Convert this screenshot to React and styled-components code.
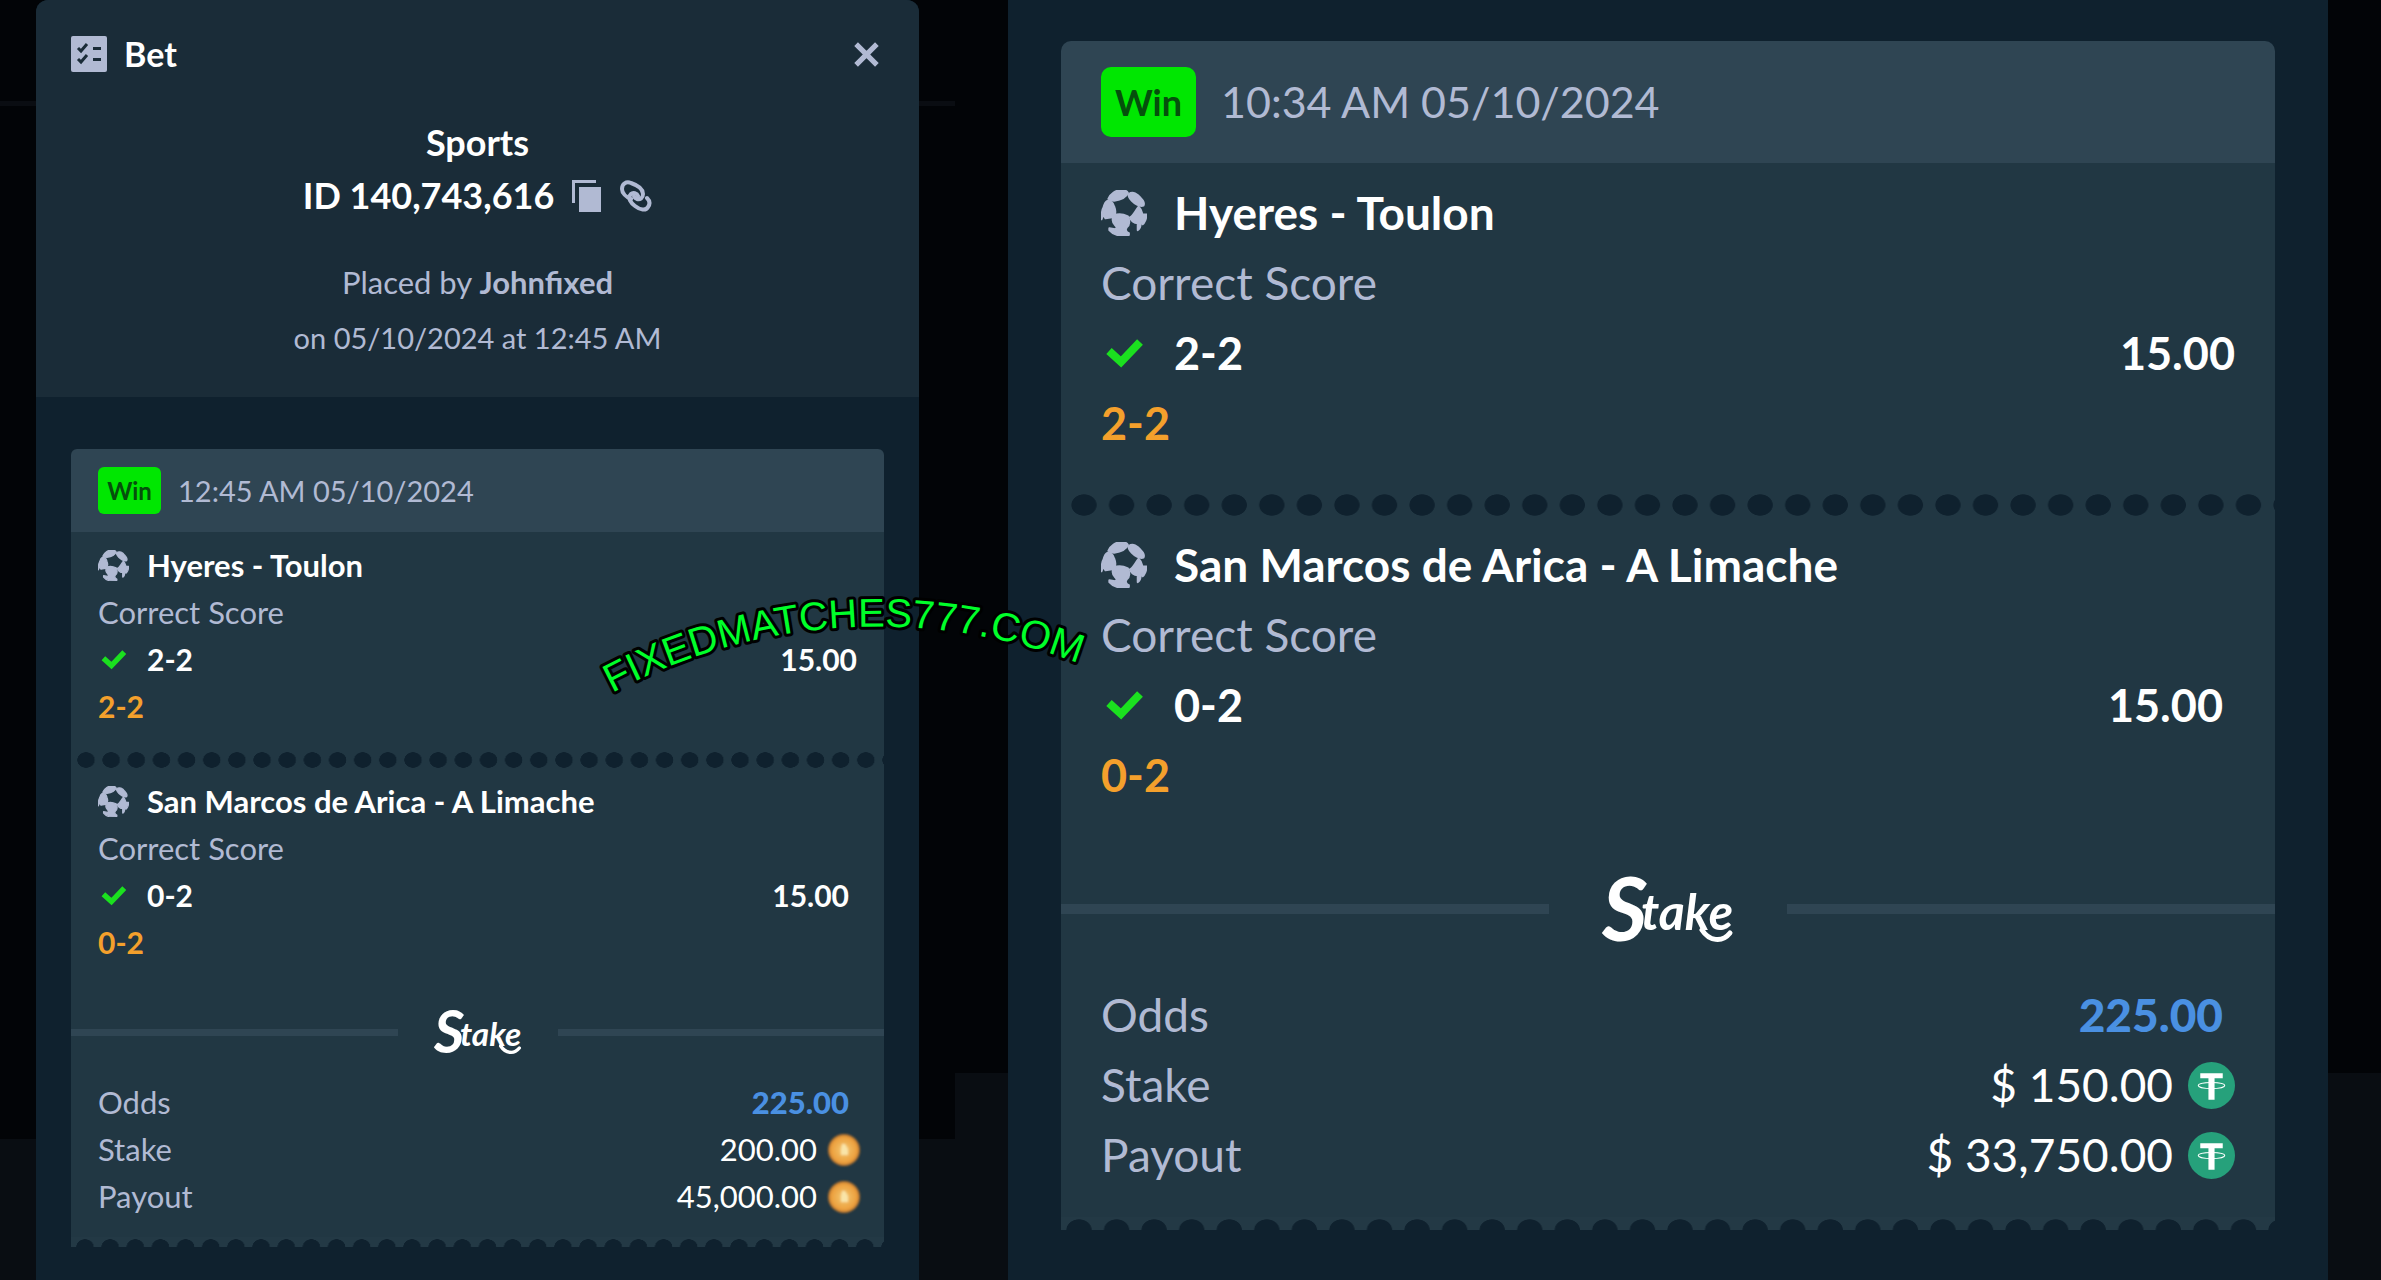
import styled, { createGlobalStyle, ThemeProvider } from "styled-components";

const GlobalStyle = createGlobalStyle`
  * {
    box-sizing: border-box;
  }
  body {
    margin: 0;
    background: #020407;
    font-family: Lato, "Open Sans", sans-serif;
    color: #ffffff;
  }
  button {
    display: flex;
    padding: 0;
    border: none;
    background: none;
    color: inherit;
    cursor: pointer;
  }
`;

const compact = {
  font: 31,
  scoreFont: 30,
  timeFont: 29,
  badgeFont: 24,
  row: 47,
  side: 27,
  totalsEnd: 24,
  endPad: 8,
  oddsPad: 11,
  radius: 6,
  headHeight: 83,
  badgeWidth: 63,
  badgeHeight: 47,
  headGap: 17,
  bodyTop: 10,
  bodyBottom: 17,
  icon: 31,
  iconGap: 18,
  dotsHeight: 48,
  dotsCenter: 30,
  dotX: 9,
  dotY: 8,
  dotsStart: 6,
  toothHeight: 10,
  toothX: 9,
  toothY: 8,
  brandTop: 44,
  brandBottom: 25,
  brandWidth: 86,
  brandHeight: 44,
  brandGap: 37,
  line: 7,
  coin: 32,
  coinGap: 11,
};

const large = {
  font: 46,
  scoreFont: 45,
  timeFont: 43,
  badgeFont: 36,
  row: 70,
  side: 40,
  totalsEnd: 40,
  endPad: 12,
  oddsPad: 12,
  radius: 10,
  headHeight: 122,
  badgeWidth: 95,
  badgeHeight: 70,
  headGap: 25,
  bodyTop: 15,
  bodyBottom: 27,
  icon: 46,
  iconGap: 27,
  dotsHeight: 72,
  dotsCenter: 47,
  dotX: 13,
  dotY: 11,
  dotsStart: 10,
  toothHeight: 13,
  toothX: 13,
  toothY: 11,
  brandTop: 66,
  brandBottom: 38,
  brandWidth: 126,
  brandHeight: 66,
  brandGap: 56,
  line: 10,
  coin: 47,
  coinGap: 15,
};

const Page = styled.main`
  position: relative;
  display: grid;
  grid-template-columns: 955fr 1426fr;
  min-height: 100vh;
  overflow: hidden;
`;
const Backdrop = styled.section`
  display: flex;
  padding: 0 ${(props) => props.$gutter}px;
  background: linear-gradient(
    #020407 ${(props) => props.$fold}px,
    #090d12 ${(props) => props.$fold}px
  );
`;
const RuledBackdrop = styled(Backdrop)`
  background: linear-gradient(
    #020407 101px,
    #0a0d12 101px 106px,
    #020407 106px ${(props) => props.$fold}px,
    #090d12 ${(props) => props.$fold}px
  );
`;
const Modal = styled.article`
  flex: 1;
  background: #0f212e;
  border-radius: ${(props) => (props.$rounded ? "12px 12px 0 0" : "0")};
  overflow: hidden;
`;
const ModalHeader = styled.header`
  height: 397px;
  padding: 0 35px;
  background: #1a2c38;
`;
const TitleBar = styled.div`
  display: flex;
  align-items: center;
  gap: 17px;
  height: 116px;
  padding-bottom: 8px;
`;
const Title = styled.h1`
  flex: 1;
  margin: 0;
  font-size: 34px;
  font-weight: 700;
  line-height: 40px;
`;
const CloseButton = styled.button`
  margin-right: 4px;
  color: #b1bad3;
`;
const BetInfo = styled.div`
  display: flex;
  flex-direction: column;
  align-items: center;
  font-size: 36px;
  font-weight: 700;
  line-height: 53px;
`;
const BetId = styled.div`
  display: flex;
  align-items: center;
  gap: 18px;
  color: #b1bad3;
  & span {
    color: #ffffff;
  }
`;
const PlacedBy = styled.p`
  margin: ${(props) => (props.$first ? 33 : 0)}px 0 0;
  text-align: center;
  font-size: ${(props) => (props.$first ? 31 : 29)}px;
  line-height: 55px;
  color: #b1bad3;
  & a {
    font-weight: 700;
    color: inherit;
    text-decoration: none;
  }
`;
const ModalBody = styled.div`
  padding: ${(props) => props.$top}px ${(props) => props.$side}px 32px;
`;

const Ticket = styled.div`
  font-size: ${(props) => props.theme.font}px;
  line-height: ${(props) => props.theme.row}px;
`;
const TicketHead = styled.div`
  display: flex;
  align-items: center;
  gap: ${(props) => props.theme.headGap}px;
  height: ${(props) => props.theme.headHeight}px;
  padding: 0 ${(props) => props.theme.side}px;
  border-radius: ${(props) => props.theme.radius}px
    ${(props) => props.theme.radius}px 0 0;
  background: #2f4553;
  color: #b1bad3;
  font-size: ${(props) => props.theme.timeFont}px;
`;
const Badge = styled.span`
  width: ${(props) => props.theme.badgeWidth}px;
  border-radius: ${(props) => props.theme.radius}px;
  background: #00e701;
  color: #05500c;
  font-size: ${(props) => props.theme.badgeFont}px;
  font-weight: 700;
  line-height: ${(props) => props.theme.badgeHeight}px;
  text-align: center;
`;
const TicketBody = styled.div`
  padding: ${(props) => props.theme.bodyTop}px 0
    ${(props) => props.theme.bodyBottom}px;
  background: #213743;
`;
const Leg = styled.div`
  padding: 0 ${(props) => props.theme.side}px;
`;
const Row = styled.div`
  display: flex;
  align-items: center;
  gap: ${(props) => props.theme.iconGap}px;
  height: ${(props) => props.theme.row}px;
  font-weight: 700;
  & svg {
    flex: none;
    width: ${(props) => props.theme.icon}px;
    height: ${(props) => props.theme.icon}px;
  }
`;
const ScoreRow = styled(Row)`
  font-size: ${(props) => props.theme.scoreFont}px;
`;
const Market = styled.div`
  color: #b1bad3;
`;
const Result = styled.div`
  color: #f4a02c;
  font-size: ${(props) => props.theme.scoreFont}px;
  font-weight: 700;
`;
const Odd = styled.span`
  margin-left: auto;
  padding-right: ${(props) => (props.$inset ? props.theme.endPad : 0)}px;
`;
const Perforation = styled.div`
  height: ${(props) => props.theme.dotsHeight}px;
  background-image: radial-gradient(
    ${(props) => props.theme.dotX}px ${(props) => props.theme.dotY}px at
      ${(props) => props.theme.dotX}px ${(props) => props.theme.dotsCenter}px,
    #0f212e 94%,
    transparent
  );
  background-size: calc((100% - ${(props) => props.theme.dotsStart + 2}px) / 32)
    100%;
  background-position: ${(props) => props.theme.dotsStart}px 0;
  background-repeat: repeat-x;
`;
const TornEdge = styled.div`
  height: ${(props) => props.theme.toothHeight}px;
  background-color: #233945;
  background-image: radial-gradient(
    ${(props) => props.theme.toothX}px ${(props) => props.theme.toothY}px at
      ${(props) => props.theme.toothX}px 100%,
    #0f212e 94%,
    transparent
  );
  background-size: calc((100% - ${(props) => props.theme.dotsStart + 2}px) / 32)
    100%;
  background-position: 5px 0;
`;
const Brand = styled.div`
  display: flex;
  align-items: center;
  gap: ${(props) => props.theme.brandGap}px;
  height: ${(props) => props.theme.brandHeight}px;
  margin: ${(props) => props.theme.brandTop}px 0
    ${(props) => props.theme.brandBottom}px;
  &::before,
  &::after {
    content: "";
    flex: 1;
    height: ${(props) => props.theme.line}px;
    background: #2f4553;
  }
  & svg {
    width: ${(props) => props.theme.brandWidth}px;
    height: ${(props) => props.theme.brandHeight}px;
    overflow: visible;
  }
`;
const Totals = styled.dl`
  margin: 0;
  padding: 0 ${(props) => props.theme.totalsEnd}px 0
    ${(props) => props.theme.side}px;
`;
const Total = styled.div`
  display: flex;
  justify-content: space-between;
  & dt {
    color: #b1bad3;
  }
  & dd {
    display: flex;
    align-items: center;
    gap: ${(props) => props.theme.coinGap}px;
    margin: 0;
  }
  & svg {
    width: ${(props) => props.theme.coin}px;
    height: ${(props) => props.theme.coin}px;
    overflow: visible;
  }
`;
const TotalOdds = styled.span`
  padding-right: ${(props) => props.theme.oddsPad}px;
  color: #4a90e2;
  font-weight: 900;
`;
const Watermark = styled.svg`
  position: absolute;
  top: 576px;
  left: 25%;
  width: 520px;
  height: 130px;
  overflow: visible;
  pointer-events: none;
  font-family: "Liberation Sans", Arial, sans-serif;
  font-size: 40px;
`;

const SlipIcon = () => (
  <svg width="36" height="36" viewBox="0 0 36 36" aria-hidden="true">
    <rect width="36" height="36" rx="2" fill="#b1bad3" />
    <path
      d="M7 12l3 3 6-7M7 23l3 3 6-7"
      fill="none"
      stroke="#1a2c38"
      strokeWidth="3"
    />
    <path d="M22 11h8v3h-8zM22 22h8v3h-8z" fill="#1a2c38" />
  </svg>
);
const CloseIcon = () => (
  <svg width="27" height="27" viewBox="0 0 26 26" aria-hidden="true">
    <path d="M3 3l20 20M23 3L3 23" stroke="currentColor" strokeWidth="5" />
  </svg>
);
const CopyIcon = () => (
  <svg width="30" height="32" viewBox="0 0 30 32" fill="currentColor">
    <path d="M0 0h24v3H3v20H0z" />
    <path d="M7 7h22v25H7z" />
  </svg>
);
const LinkIcon = () => (
  <svg
    width="32"
    height="32"
    viewBox="0 0 32 32"
    fill="none"
    stroke="currentColor"
    strokeWidth="4"
    strokeLinecap="round"
  >
    <path d="M11 19C6 17 2 13 2 9C2 4 6 1 11 3C17 5 23 9 23 14C23 18 20 20 17 19C15 18 14 17 14 16" />
    <path d="M18 16C17 13 13 12 11 14C7 18 11 23 15 26C20 30 26 31 28 27C31 23 29 20 27 18" />
  </svg>
);
const BallIcon = () => (
  <svg
    viewBox="0 0 46 47"
    fill="#b1bad3"
    stroke="#b1bad3"
    strokeWidth="2"
    strokeLinejoin="round"
    aria-hidden="true"
  >
    <path d="M7 9C9 4 15 0 20 0C23 0 26 1 27 3C25 8 20 10 13 11C10 11 8 10 7 9Z" />
    <path d="M28 4C32 1 37 4 40 8C43 11 44 14 43 16C39 17 35 15 31 11C29 9 27 6 28 4Z" />
    <path d="M6 11C9 11 12 13 13 17C15 22 14 26 11 28L4 29L2 25L0 30C0 25 0 21 2 18C3 14 4 12 6 11Z" />
    <path d="M38 17C41 20 41 23 42 25L46 25C46 29 44 34 42 35C42 32 41 32 40 34C40 38 39 40 37 41L37 34C33 34 30 31 29 28C32 27 34 22 38 17Z" />
    <path d="M13 26C17 24 23 25 27 27C29 31 29 36 26 38C24 40 25 43 28 44L28 46C20 48 12 46 8 41L8 39L14 40C16 39 16 38 14 36C11 33 11 29 13 26Z" />
  </svg>
);
const CheckIcon = () => (
  <svg viewBox="0 0 46 46" aria-hidden="true">
    <path
      d="M8 21l12 11 19-20"
      fill="none"
      stroke="#1be01f"
      strokeWidth="8"
    />
  </svg>
);
const TetherIcon = () => (
  <svg viewBox="0 0 46 46" aria-hidden="true">
    <circle cx="23" cy="23" r="23" fill="#26a17b" />
    <path d="M12 11h22v5h-8v21h-6V16h-8z" fill="#ffffff" />
    <ellipse
      cx="23"
      cy="23"
      rx="13"
      ry="3"
      fill="none"
      stroke="#ffffff"
      strokeWidth="1"
    />
  </svg>
);
const GoldIcon = () => (
  <svg viewBox="0 0 32 32" aria-hidden="true">
    <defs>
      <radialGradient id="gold">
        <stop offset="0" stopColor="#f6d07a" />
        <stop offset="0.4" stopColor="#f0b458" />
        <stop offset="0.8" stopColor="#ec9f3c" />
        <stop offset="1" stopColor="#a8682c" />
      </radialGradient>
      <filter id="soft">
        <feGaussianBlur stdDeviation="1" />
      </filter>
    </defs>
    <g filter="url(#soft)">
      <circle cx="16" cy="16" r="16" fill="url(#gold)" />
      <path d="M14 10h3l3 5v6h-7v-6z" fill="#f9e4a8" />
    </g>
  </svg>
);
const BrandLogo = () => (
  <svg
    viewBox="0 0 126 66"
    fill="#ffffff"
    fontStyle="italic"
    fontWeight="700"
    role="img"
    aria-label="Stake"
  >
    <text x="-3" y="65" fontSize="88">
      S
    </text>
    <text x="36" y="54" fontSize="50">
      take
    </text>
    <path
      d="M97 54C104 65 117 67 125 57"
      fill="none"
      stroke="#ffffff"
      strokeWidth="5"
      strokeLinecap="round"
    />
  </svg>
);

const legs = [
  { match: "Hyeres - Toulon", pick: "2-2", odd: "15.00" },
  { match: "San Marcos de Arica - A Limache", pick: "0-2", odd: "15.00" },
];

const BetTicket = (props) => {
  const Coin = props.coin;
  return (
    <ThemeProvider theme={props.size}>
      <Ticket>
        <TicketHead>
          <Badge>Win</Badge>
          <time>{props.time}</time>
        </TicketHead>
        <TicketBody>
          {legs.map((leg, index) => (
            <div key={leg.match}>
              {index > 0 && <Perforation />}
              <Leg>
                <Row>
                  <BallIcon />
                  {leg.match}
                </Row>
                <Market>Correct Score</Market>
                <ScoreRow>
                  <CheckIcon />
                  {leg.pick}
                  <Odd $inset={index > 0}>{leg.odd}</Odd>
                </ScoreRow>
                <Result>{leg.pick}</Result>
              </Leg>
            </div>
          ))}
          <Brand>
            <BrandLogo />
          </Brand>
          <Totals>
            <Total>
              <dt>Odds</dt>
              <dd>
                <TotalOdds>225.00</TotalOdds>
              </dd>
            </Total>
            <Total>
              <dt>Stake</dt>
              <dd>
                {props.stake}
                <Coin />
              </dd>
            </Total>
            <Total>
              <dt>Payout</dt>
              <dd>
                {props.payout}
                <Coin />
              </dd>
            </Total>
          </Totals>
        </TicketBody>
        <TornEdge />
      </Ticket>
    </ThemeProvider>
  );
};

const App = () => {
  return (
    <Page>
      <GlobalStyle />
      <RuledBackdrop $gutter={36} $fold={1139}>
        <Modal $rounded>
          <ModalHeader>
            <TitleBar>
              <SlipIcon />
              <Title>Bet</Title>
              <CloseButton type="button" aria-label="Close">
                <CloseIcon />
              </CloseButton>
            </TitleBar>
            <BetInfo>
              <div>Sports</div>
              <BetId>
                <span>ID 140,743,616</span>
                <button type="button" aria-label="Copy ID">
                  <CopyIcon />
                </button>
                <button type="button" aria-label="Copy link">
                  <LinkIcon />
                </button>
              </BetId>
            </BetInfo>
            <PlacedBy $first>
              Placed by <a href="#johnfixed">Johnfixed</a>
            </PlacedBy>
            <PlacedBy>on 05/10/2024 at 12:45 AM</PlacedBy>
          </ModalHeader>
          <ModalBody $top={52} $side={35}>
            <BetTicket
              size={compact}
              time="12:45 AM 05/10/2024"
              stake="200.00"
              payout="45,000.00"
              coin={GoldIcon}
            />
          </ModalBody>
        </Modal>
      </RuledBackdrop>
      <Backdrop $gutter={53} $fold={1073}>
        <Modal>
          <ModalBody $top={41} $side={53}>
            <BetTicket
              size={large}
              time="10:34 AM 05/10/2024"
              stake="$ 150.00"
              payout="$ 33,750.00"
              coin={TetherIcon}
            />
          </ModalBody>
        </Modal>
      </Backdrop>
      <Watermark viewBox="0 0 520 130">
        <path id="arc" d="M17 117A565 565 0 0 1 505 96" fill="none" />
        <text
          fill="#00ff2a"
          stroke="#000000"
          strokeWidth="6"
          strokeLinejoin="round"
          paintOrder="stroke"
        >
          <textPath href="#arc">FIXEDMATCHES777.COM</textPath>
        </text>
      </Watermark>
    </Page>
  );
};

export default App;
